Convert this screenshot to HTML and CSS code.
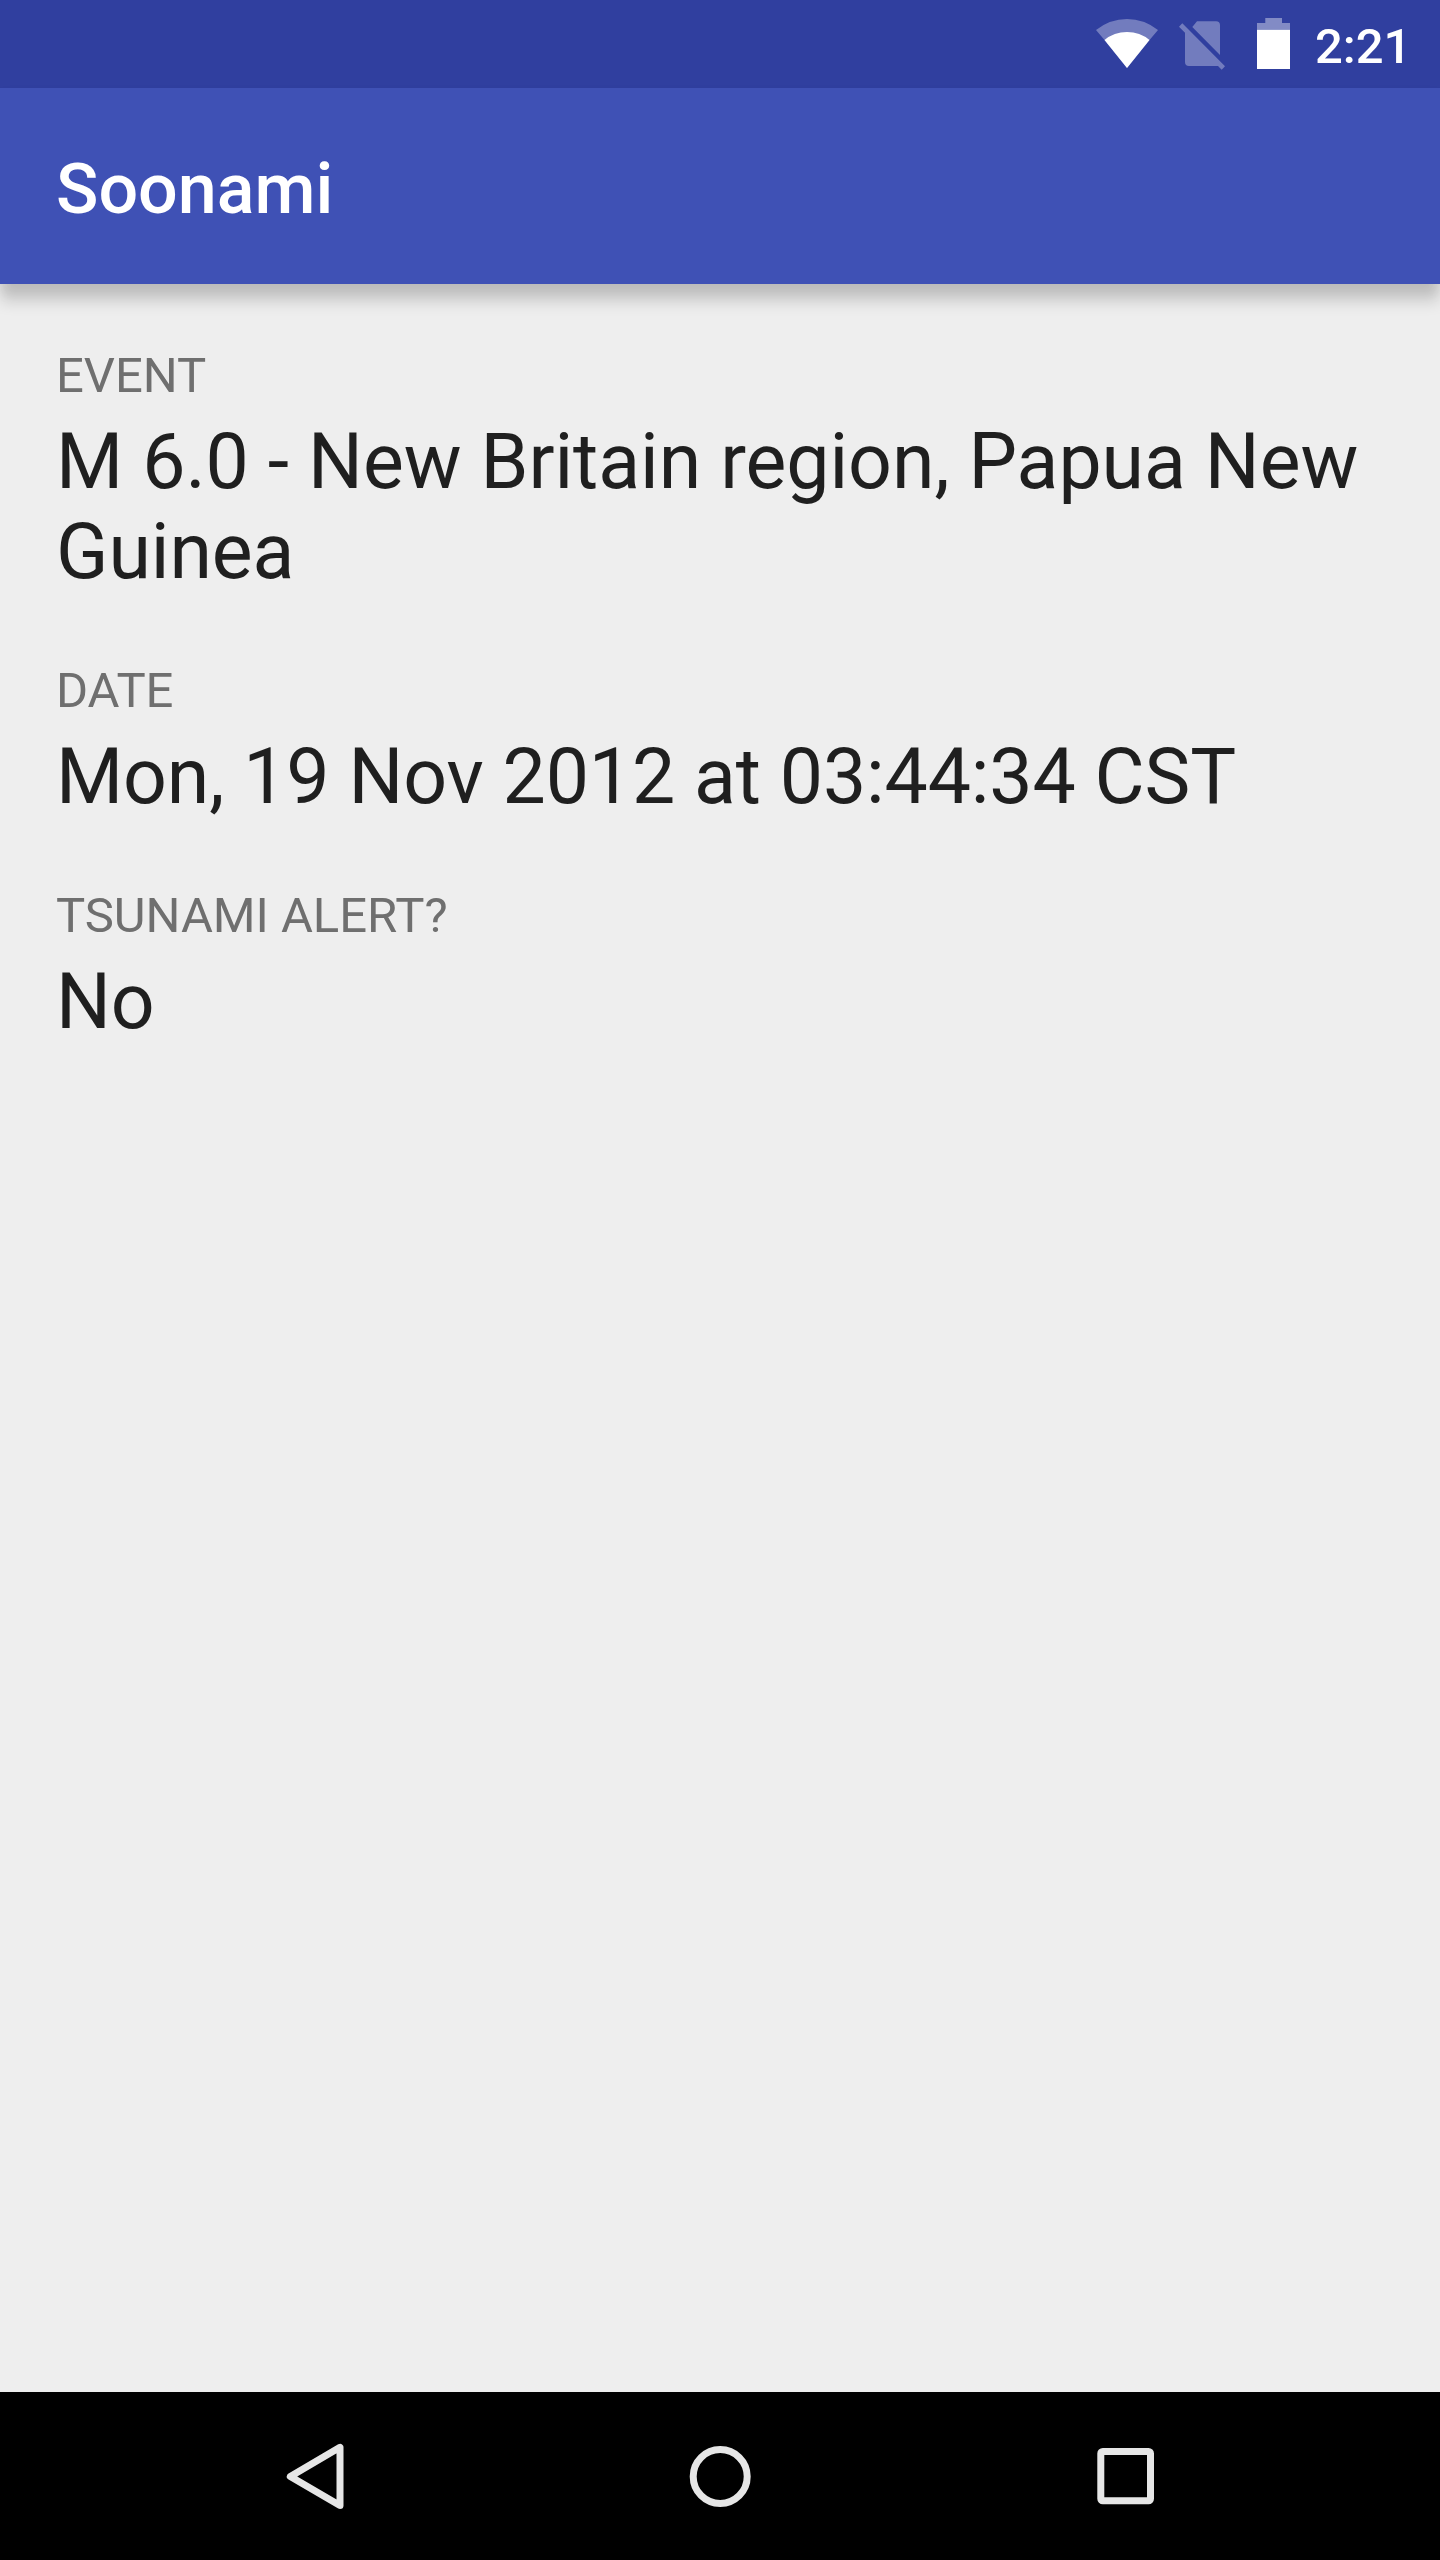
FILE: index.html
```html
<!DOCTYPE html>
<html lang="en">
<head>
<meta charset="utf-8">
<title>Soonami</title>
<link rel="stylesheet" href="styles.css">
</head>
<body>
<div class="screen">
  <div class="status">
    <svg class="wifi" width="62" height="49" viewBox="0 0 62 49"><path class="dim" d="M31 49 53.5 21 62 11Q48 0 31 0T0 11L8.5 21Z"/><path d="M31 49 8.5 21Q18 13 31 13T53.5 21Z"/></svg>
    <svg class="sim" width="46" height="49" viewBox="0 0 46 49"><path class="dim" d="M13.3 6 18 .3H37Q41 .3 41 4.3V34ZM0 5.7 3.3 2.3 46 45.3 42.7 48.7 39 45H10Q6 45 6 41V11.7Z"/></svg>
    <svg class="battery" width="33" height="51" viewBox="0 0 33 51"><path class="cap" d="M8.3 0H25V5H33V11.7H0V5H8.3Z"/><path d="M0 11.7H33V51H0Z"/></svg>
    <span class="clock">2:21</span>
  </div>
  <header class="bar"><h1 class="title">Soonami</h1></header>
  <main class="content">
    <p class="label">EVENT</p>
    <p class="value">M 6.0 - New Britain region, Papua New Guinea</p>
    <p class="label">DATE</p>
    <p class="value date">Mon, 19 Nov 2012 at 03:44:34 CST</p>
    <p class="label">TSUNAMI ALERT?</p>
    <p class="value">No</p>
  </main>
  <nav class="nav">
    <svg class="key" width="72" height="72" viewBox="0 0 72 72"><path d="M61 7.3V65.5L11.3 36.4Z"/></svg>
    <svg class="key" width="72" height="72" viewBox="0 0 72 72"><circle cx="36.2" cy="36.5" r="27"/></svg>
    <svg class="key" width="72" height="72" viewBox="0 0 72 72"><rect x="11.8" y="11.5" width="49.7" height="49.3" rx="2"/></svg>
  </nav>
</div>
</body>
</html>
```
FILE: styles.css
```css
body { margin: 0; font-family: Roboto, sans-serif; }
.screen { display: flex; flex-direction: column; width: 1440px; height: 2560px; background: #eee; }
.status { display: flex; align-items: flex-start; box-sizing: border-box; height: 88px; padding-left: 1096px; background: #303f9f; }
.status svg { fill: #fff; flex: none; }
.dim { opacity: .32; }
.cap { opacity: .4; }
.wifi { margin-top: 19px; }
.sim { margin: 21px 0 0 21px; }
.battery { margin: 18px 0 0 32px; }
.clock { margin: 18px 0 0 25px; color: #fff; font-size: 49px; font-weight: 500; line-height: 57px; }
.bar { display: flex; align-items: center; box-sizing: border-box; height: 196px; padding: 6px 0 0 56px; background: #3f51b5; box-shadow: 0 19px 14px -1px rgba(0,0,0,.14), 0 8px 12px rgba(0,0,0,.09); }
.title { margin: 0; color: #fff; font-size: 70px; font-weight: 500; line-height: 82px; }
.content { flex: 1; padding: 63px 50px 0 56px; }
.label { margin: 0; color: #6f6f6f; font-size: 49px; line-height: 57px; letter-spacing: -.05px; }
.value { margin: 13px 0 65px; color: #1f1f1f; font-size: 77px; line-height: 90px; letter-spacing: -.07px; }
.date { letter-spacing: -.14px; }
.nav { display: flex; justify-content: center; align-items: center; gap: 333px; height: 168px; background: #000; }
.key { fill: none; stroke: #e6e6e6; stroke-width: 7; stroke-linejoin: round; }
```
